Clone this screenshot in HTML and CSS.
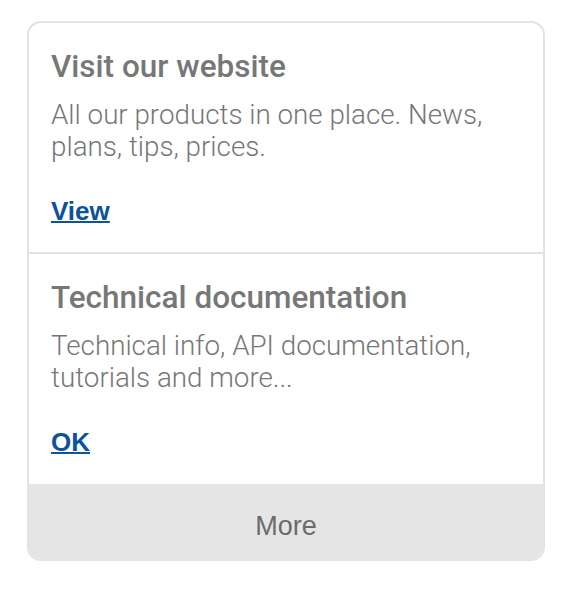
FILE: index.html
```html
<!DOCTYPE html>
<html lang="en">
<head>
<meta charset="utf-8">
<title>Cards</title>
<link rel="stylesheet" href="styles.css">
</head>
<body>
  <div class="page">
    <div class="card">
      <section class="item">
        <h2 class="item-title">Visit our website</h2>
        <p class="item-desc">All our products in one place. News, plans, tips, prices.</p>
        <a class="item-link" href="#">View</a>
      </section>
      <section class="item">
        <h2 class="item-title">Technical documentation</h2>
        <p class="item-desc">Technical info, API documentation, tutorials and more...</p>
        <a class="item-link" href="#">OK</a>
      </section>
      <div class="more">More</div>
    </div>
  </div>
</body>
</html>
```

FILE: styles.css
```css
html, body {
  margin: 0;
  padding: 0;
  background: #ffffff;
}

.page {
  padding: 21px 29px 0 27px;
}

.card {
  border: 2px solid #e3e3e3;
  border-radius: 14px;
  overflow: hidden;
  background: #ffffff;
}

.item {
  padding: 26px 22px 25px 22px;
  display: flex;
  flex-direction: column;
  align-items: flex-start;
}

.item + .item {
  border-top: 2px solid #e3e3e3;
  padding-bottom: 26px;
}

.item-title {
  margin: 0;
  font-family: Roboto, "Liberation Sans", sans-serif;
  font-weight: 500;
  font-size: 31.5px;
  line-height: 36px;
  color: #777777;
}

.item-desc {
  margin: 14px 0 0 0;
  font-family: Roboto, "Liberation Sans", sans-serif;
  font-weight: 300;
  font-size: 27.75px;
  line-height: 32px;
  color: #777777;
}

.item-link {
  margin-top: 32px;
  font-family: "Liberation Sans", Arial, sans-serif;
  font-weight: 700;
  font-size: 26px;
  line-height: 32px;
  color: #0b539b;
  text-decoration: underline;
  text-decoration-thickness: 2px;
}

.more {
  height: 75px;
  box-sizing: border-box;
  padding-top: 26px;
  background: #e5e5e5;
  text-align: center;
  font-family: "Liberation Sans", Arial, sans-serif;
  font-size: 27px;
  line-height: 32px;
  color: #6b6b6b;
}
```
